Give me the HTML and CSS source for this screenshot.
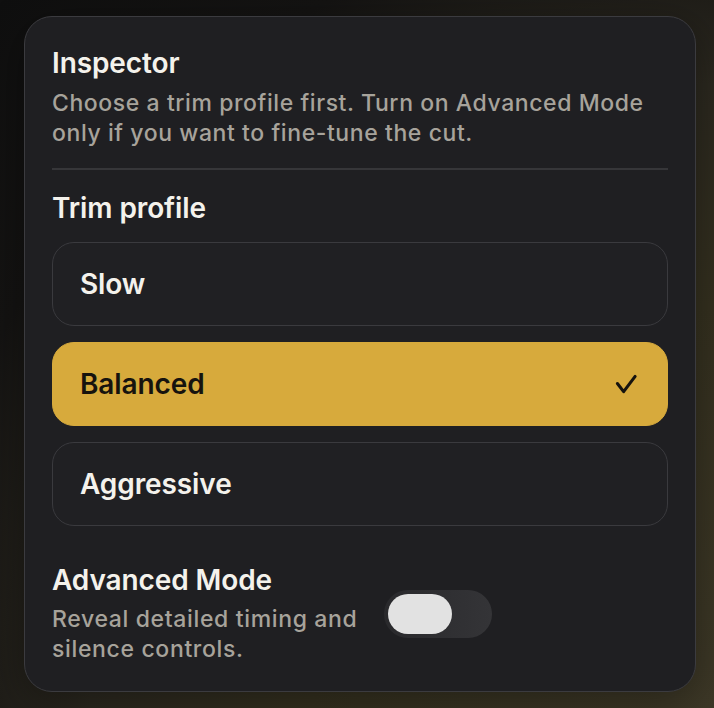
FILE: index.html
```html
<!DOCTYPE html>
<html lang="en">
<head>
<meta charset="utf-8">
<title>Inspector</title>
<link rel="stylesheet" href="styles.css">
</head>
<body>
<main class="stage">
  <section class="card">
    <header class="head">
      <h1 class="title">Inspector</h1>
      <p class="subtitle">Choose a trim profile first. Turn on Advanced Mode only if you want to fine-tune the cut.</p>
    </header>
    <hr class="divider">
    <h2 class="section-title">Trim profile</h2>
    <div class="options">
      <div class="option">Slow</div>
      <div class="option selected">Balanced
        <svg class="check" viewBox="0 0 24 24" width="24" height="24" aria-hidden="true"><path d="M2.5 11 L9 19.5 L21 3.5" fill="none" stroke="#16130e" stroke-width="3.2" stroke-linecap="round" stroke-linejoin="round"/></svg>
      </div>
      <div class="option">Aggressive</div>
    </div>
    <div class="advanced">
      <div class="adv-text">
        <h2 class="section-title">Advanced Mode</h2>
        <p class="adv-desc">Reveal detailed timing and silence controls.</p>
      </div>
      <div class="toggle"><span class="knob"></span></div>
    </div>
  </section>
</main>
</body>
</html>
```

FILE: styles.css
```css
* { box-sizing: border-box; }
html, body { margin: 0; padding: 0; }
body {
  width: 714px;
  height: 708px;
  overflow: hidden;
  font-family: Inter, "Noto Sans", "Liberation Sans", sans-serif;
  background:
    radial-gradient(circle at 100% 100%, #3d3827 0%, #34301f 40%, #2b281f 62%, #141312 80%, #0f0f0f 100%);
}
.stage {
  padding: 16px 18px 16px 24px;
}
.card {
  width: 672px;
  height: 676px;
  background: #1f1f22;
  border: 1.5px solid #3b3b3f;
  border-radius: 28px;
  padding: 30px 27px 27px 27px;
  box-shadow: 0 10px 40px rgba(0,0,0,0.35);
}
.title,
.section-title {
  margin: 0;
  font-size: 28px;
  line-height: 32px;
  font-weight: 600;
  color: #f4f2ec;
  letter-spacing: -0.1px;
}
.subtitle {
  margin: 9px 0 0;
  font-size: 23px;
  line-height: 30px;
  font-weight: 500;
  color: #a7a39b;
  letter-spacing: 0.58px;
}
.divider {
  display: block;
  margin: 20px 0 0;
  border: 0;
  height: 2px;
  background: #363639;
}
.divider + .section-title { margin-top: 22px; }
.options {
  margin-top: 18px;
  display: flex;
  flex-direction: column;
  gap: 16px;
}
.option {
  height: 84px;
  border-radius: 22px;
  border: 1.5px solid #3a3a3e;
  background: #202023;
  display: flex;
  align-items: center;
  justify-content: space-between;
  padding: 0 29px 0 27px;
  font-size: 28px;
  font-weight: 600;
  color: #f4f2ec;
  letter-spacing: -0.1px;
}
.option.selected {
  background: #d7aa3c;
  border-color: #d7aa3c;
  color: #16130e;
}
.check { display: block; width: 23px; height: 23px; }
.advanced {
  margin-top: 38px;
  display: flex;
  align-items: center;
  gap: 20px;
}
.adv-text { width: 312px; }
.adv-desc {
  margin: 8px 0 0;
  font-size: 23px;
  line-height: 30px;
  font-weight: 500;
  color: #a7a39b;
  letter-spacing: 0.65px;
}
.toggle {
  width: 108px;
  height: 48px;
  border-radius: 24px;
  background: linear-gradient(90deg, #29292c 0%, #343437 100%);
  padding: 4px;
  display: flex;
  align-items: center;
}
.knob {
  width: 64px;
  height: 40px;
  border-radius: 20px;
  background: #e2e2e2;
}
```
